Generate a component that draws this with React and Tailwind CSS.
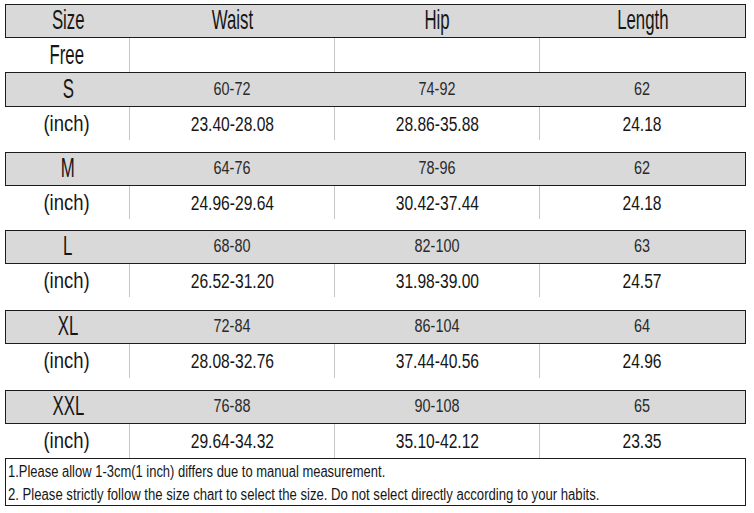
import React from 'react';

const sizes = [
  { size: 'S', cm: ['60-72', '74-92', '62'], inch: ['23.40-28.08', '28.86-35.88', '24.18'], row: 'h-[35px]', inchRow: 'h-[33px]', gap: 'mb-[12px]' },
  { size: 'M', cm: ['64-76', '78-96', '62'], inch: ['24.96-29.64', '30.42-37.44', '24.18'], row: 'h-[34px]', inchRow: 'h-[33px]', gap: 'mb-[11px]' },
  { size: 'L', cm: ['68-80', '82-100', '63'], inch: ['26.52-31.20', '31.98-39.00', '24.57'], row: 'h-[34px]', inchRow: 'h-[33px]', gap: 'mb-[13px]' },
  { size: 'XL', cm: ['72-84', '86-104', '64'], inch: ['28.08-32.76', '37.44-40.56', '24.96'], row: 'h-[34px]', inchRow: 'h-[34px]', gap: 'mb-[12px]' },
  { size: 'XXL', cm: ['76-88', '90-108', '65'], inch: ['29.64-34.32', '35.10-42.12', '23.35'], row: 'h-[34px]', inchRow: 'h-[34px]', gap: 'mb-0' },
];

const cols = 'grid grid-cols-[124px_205px_205px_205px]';

// the chart uses a tall condensed face, so Liberation Sans is squeezed sideways
function Label({ children }) {
  return <span className="inline-block scale-x-[0.6] text-[28px] leading-none">{children}</span>;
}

function Num({ children }) {
  return <span className="inline-block scale-x-[0.8] text-[18px] leading-none text-[#2a2a2a]">{children}</span>;
}

function InchNum({ children }) {
  return <span className="inline-block scale-x-[0.78] text-[20px] leading-none">{children}</span>;
}

function GrayRow({ className, children }) {
  return (
    <div className={`${cols} ${className} items-center bg-[#d9d9d9] border border-[#1c1c1c]`}>
      {children}
    </div>
  );
}

function WhiteRow({ className, first, cells }) {
  return (
    <div className={`${cols} ${className} w-[741px]`}>
      <div className="flex items-center justify-center">{first}</div>
      {cells.map((c, i) => (
        <div key={i} className="flex items-center justify-center border-l border-[#c6c6c6]">
          {c && <InchNum>{c}</InchNum>}
        </div>
      ))}
    </div>
  );
}

export default function App() {
  return (
    <div
      className="w-[754px] h-[513px] bg-white pt-[4px] text-[#161616] overflow-hidden"
      style={{ fontFamily: '"Liberation Sans", Arial, sans-serif' }}
    >
      <div className="ml-[5px] w-[741px]">
        {/* Header */}
        <GrayRow className="h-[34px]">
          <div className="text-center"><Label>Size</Label></div>
          <div className="text-center"><Label>Waist</Label></div>
          <div className="text-center"><Label>Hip</Label></div>
          <div className="text-center"><Label>Length</Label></div>
        </GrayRow>

        <WhiteRow className="h-[34px]" first={<Label>Free</Label>} cells={['', '', '']} />

        {sizes.map((s) => (
          <div key={s.size} className={s.gap}>
            <GrayRow className={s.row}>
              <div className="text-center"><Label>{s.size}</Label></div>
              {s.cm.map((v, i) => (
                <div key={i} className="text-center"><Num>{v}</Num></div>
              ))}
            </GrayRow>
            <WhiteRow
              className={s.inchRow}
              first={<span className="inline-block scale-x-[0.84] text-[22px] leading-none">(inch)</span>}
              cells={s.inch}
            />
          </div>
        ))}

        {/* Notes */}
        <div className="h-[48px] border border-[#1c1c1c] px-[2px] pt-[1px] text-[16px] leading-[23px] whitespace-nowrap">
          <div className="origin-left scale-x-[0.81]">1.Please allow 1-3cm(1 inch) differs due to manual measurement.</div>
          <div className="origin-left scale-x-[0.82]">2. Please strictly follow the size chart to select the size. Do not select directly according to your habits.</div>
        </div>
      </div>
    </div>
  );
}
